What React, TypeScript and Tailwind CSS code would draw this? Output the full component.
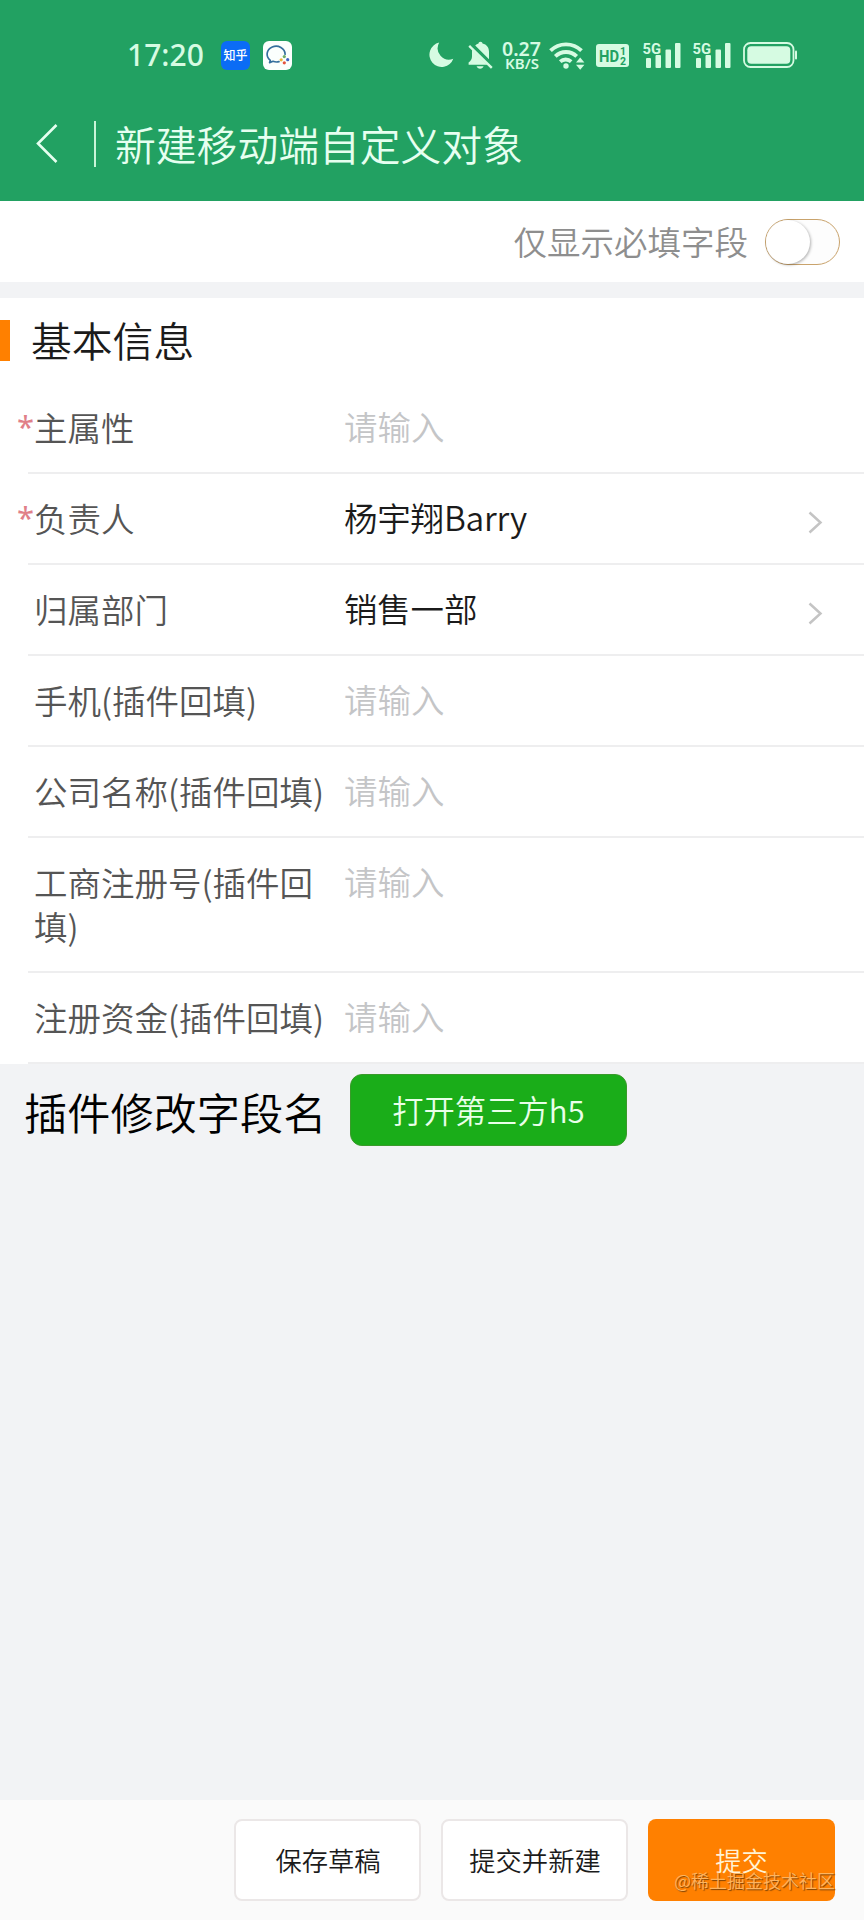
import React from 'react';

interface Field {
  label: string;
  value?: string;
  required?: boolean;
  arrow?: boolean;
}

const fields: Field[] = [
  { label: '主属性', required: true },
  { label: '负责人', value: '杨宇翔Barry', required: true, arrow: true },
  { label: '归属部门', value: '销售一部', arrow: true },
  { label: '手机(插件回填)' },
  { label: '公司名称(插件回填)' },
  { label: '工商注册号(插件回填)' },
  { label: '注册资金(插件回填)' },
];

const Signal: React.FC = () => (
  <svg className="overflow-visible" width="38" height="28" viewBox="0 0 38 28" fill="#d6fbe2">
    <text x="-0.5" y="12.5" fontFamily="Roboto" fontSize="15.5" fontWeight="700" textLength="18.5" lengthAdjust="spacingAndGlyphs">5G</text>
    <rect x="3" y="17" width="5" height="10" rx="1" />
    <rect x="12.5" y="14" width="5.5" height="13" rx="1" />
    <rect x="22.5" y="8.5" width="5.5" height="18.5" rx="1" />
    <rect x="32" y="2" width="5.5" height="25" rx="1" />
  </svg>
);

const StatusBar: React.FC = () => (
  <div className="flex h-[110px] items-center pl-[127px] text-[#d6fbe2]">
    <span className="w-[94px] font-['Noto_Sans'] text-[30px] leading-none font-medium">17:20</span>
    <span className="flex size-[29px] items-center justify-center rounded-[6px] bg-[#0b6cf5] text-[12px] leading-none font-medium text-white">
      知乎
    </span>
    <svg className="ml-[13px]" width="29" height="29" viewBox="0 0 29 29" fill="none">
      <rect width="29" height="29" rx="6" fill="#fbfffd" />
      <path d="M7.3 19.4a9 8 0 1 1 14.8-6.2M7.3 19.4l-.7 2.2 3.4-1.3a10 10 0 0 0 6 .4" stroke="#356f9d" strokeWidth="1.7" strokeLinecap="round" strokeLinejoin="round" />
      <circle cx="21.3" cy="15.6" r="1.6" fill="#6fae6a" />
      <circle cx="24.7" cy="18.7" r="1.6" fill="#4262c4" />
      <circle cx="21.3" cy="21.8" r="1.6" fill="#e5533f" />
      <circle cx="18.2" cy="18.8" r="1.6" fill="#efb63c" />
    </svg>
    <svg className="ml-[137px]" width="25" height="26" viewBox="0 0 25 26" fill="#d6fbe2">
      <path d="M10.2.6A12.3 12.3 0 1 0 24.3 16.8 11.4 11.4 0 0 1 10.2.6Z" />
    </svg>
    <svg className="ml-[13px]" width="27" height="28" viewBox="0 0 27 28" fill="#d6fbe2">
      <path d="M13.5.8c1.3 0 1.8.7 2 1.8 4.3 1 6.5 4 6.5 8.2v7.4L8.2 4.4c1-.9 2-1.5 3.3-1.8.2-1.1.7-1.8 2-1.8Z" />
      <path d="M5.2 8.4 20.3 23.8H1.6v-2.3c2.3-1.8 3.4-3.5 3.4-6v-4.7c0-.9 0-1.6.2-2.4ZM9.6 25.2h7c-.5 1.6-1.8 2.5-3.5 2.5s-3-.9-3.5-2.5Z" />
      <path d="m2.2 4.8 22.6 22" stroke="#d6fbe2" strokeWidth="2.4" fill="none" />
    </svg>
    <div className="ml-[7px] flex w-[41px] flex-col items-center font-['Noto_Sans'] font-semibold">
      <span className="h-[16px] text-[19.5px] leading-[16px]">0.27</span>
      <span className="h-[13px] pl-px text-[15px] leading-[13px]">KB/S</span>
    </div>
    <svg className="ml-[7px]" width="37" height="29" viewBox="0 0 37 29" fill="none" stroke="#d6fbe2" strokeWidth="3.8">
      <path d="M1.5 9.7a22 22 0 0 1 31 0M6.3 15.4a15.2 15.2 0 0 1 21.4 0M11.2 20.6a8.3 8.3 0 0 1 11 0" />
      <circle cx="17" cy="25" r="2.7" fill="#d6fbe2" stroke="none" />
      <path d="m27 21.5 4.2-5 4.2 5ZM27 23.8l4.2 5 4.2-5Z" fill="#d6fbe2" stroke="none" />
    </svg>
    <svg className="ml-[10px]" width="33" height="23" viewBox="0 0 33 23" fontFamily="Roboto" fontWeight="700" fill="#22a162">
      <rect width="33" height="23" rx="3" fill="#d6fbe2" />
      <text x="3" y="17.5" fontSize="17" textLength="20" lengthAdjust="spacingAndGlyphs">HD</text>
      <text x="24" y="10.5" fontSize="10.5">1</text>
      <text x="24" y="20.5" fontSize="10.5">2</text>
    </svg>
    <div className="ml-[14px] flex gap-3">
      <Signal />
      <Signal />
    </div>
    <svg className="ml-3" width="55" height="26" viewBox="0 0 55 26" fill="none">
      <rect x="1" y="1" width="49.5" height="24" rx="6.5" stroke="#d6fbe2" strokeWidth="1.8" />
      <rect x="4.3" y="4.3" width="43" height="17.5" rx="4" fill="#d6fbe2" />
      <path d="M53 9.5v7" stroke="#d6fbe2" strokeWidth="2" strokeLinecap="round" />
    </svg>
  </div>
);

const FieldRow: React.FC<{ field: Field }> = ({ field }) => (
  <div className="ml-7 flex items-start border-b-2 border-[#eeeeef] pt-[22px] pr-[41px] pb-[23.6px] text-[33.5px] leading-[43.5px]">
    <div className="-ml-[11px] flex w-[327px] shrink-0">
      <span className="w-[17px] shrink-0 font-['Noto_Sans'] text-[31px] font-normal text-[#e08088]">{field.required && '*'}</span>
      <span className="w-[294px] break-all text-[#555]">{field.label}</span>
    </div>
    <div className={field.value ? '-mt-px grow tracking-[-0.2px] text-[#1b1b1b]' : '-mt-px grow text-[#c4c5c7]'}>
      {field.value || '请输入'}
    </div>
    {field.arrow && (
      <svg className="mt-[15px]" width="15" height="23" viewBox="0 0 15 23" fill="none" stroke="#c4c4c4" strokeWidth="2.5">
        <path d="m1.5 1.5 11 10-11 10" />
      </svg>
    )}
  </div>
);

const App: React.FC = () => {
  return (
    <div className="flex h-[1920px] w-[864px] flex-col overflow-hidden bg-[#f2f3f5] font-['Noto_Sans_CJK_SC',sans-serif] font-[350]">
      <header className="h-[201px] shrink-0 bg-[#22a162]">
        <StatusBar />
        <div className="flex h-[68px] items-center pl-[36px] text-[#e6fff0]">
          <svg width="22" height="40" viewBox="0 0 22 40" fill="none" stroke="currentColor" strokeWidth="2.6">
            <path d="M20.5 1 2 19.5 20.5 38" />
          </svg>
          <span className="ml-[36px] h-[46px] w-[2px] bg-[#c9f5d8]" />
          <h1 className="mt-px ml-[19px] text-[40.8px] leading-none">新建移动端自定义对象</h1>
        </div>
      </header>

      <div className="flex h-[81px] shrink-0 items-center justify-end bg-white pr-6">
        <span className="mr-[17px] -mt-[2px] text-[33.5px] leading-none text-[#8e8e8e]">仅显示必填字段</span>
        <span className="flex h-[46px] w-[75px] rounded-full border border-[#c9a36c] bg-[#fdfdfd]">
          <span className="size-[44px] rounded-full bg-white shadow-[1px_1px_3px_rgba(0,0,0,0.3)]" />
        </span>
      </div>

      <section className="mt-4 shrink-0 bg-white">
        <div className="flex h-[85px] items-center">
          <span className="h-[41px] w-[10px] bg-[#ff8000]" />
          <h2 className="ml-[21px] text-[40.8px] leading-none text-[#1b1b1b]">基本信息</h2>
        </div>
        {fields.map((field) => (
          <FieldRow key={field.label} field={field} />
        ))}
      </section>

      <div className="flex items-start pt-[10px] pl-[24px]">
        <span className="mt-[16px] w-[326px] text-[43.2px] leading-none text-black">插件修改字段名</span>
        <button className="h-[72px] w-[277px] rounded-[12px] border border-[#3a9a2b] bg-[#1aad19] pb-[2px] text-[31.3px] leading-none text-[#e9ffe9]">
          打开第三方h5
        </button>
      </div>

      <footer className="relative mt-auto flex h-[120px] shrink-0 items-start justify-end gap-5 bg-[#fafafa] pt-[19px] pr-[29px] text-[26.3px] leading-none text-[#1b1b1b]">
        <button className="h-[82px] w-[187px] rounded-lg border-2 border-[#ebe7e7] bg-white pl-px">保存草稿</button>
        <button className="h-[82px] w-[187px] rounded-lg border-2 border-[#ebe7e7] bg-white pl-px">提交并新建</button>
        <button className="h-[82px] w-[187px] rounded-lg bg-[#ff8000] text-[#fff3d6]">提交</button>
        <span className="absolute top-[71px] right-[29px] text-[18px] whitespace-nowrap text-[#ffb45e] [text-shadow:1px_1px_1px_#7a4208]">
          @稀土掘金技术社区
        </span>
      </footer>
    </div>
  );
};

export default App;
